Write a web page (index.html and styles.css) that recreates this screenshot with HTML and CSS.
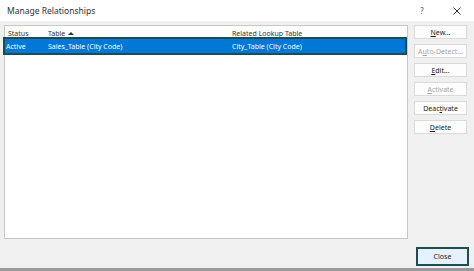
FILE: index.html
```html
<html lang="en">
  <head>
    <meta charset="UTF-8" />
    <title>Manage Relationships</title>
    <link rel="stylesheet" href="styles.css">
  </head>
  <body>
    <div class="dialog">
      <div class="titlebar">
        <span class="title">Manage Relationships</span>
        <span class="help">?</span>
        <span class="close-x">
          <svg width="8" height="8" viewBox="0 0 8 8">
            <path d="M0.5 0.5 L7.5 7.5 M7.5 0.5 L0.5 7.5" stroke="#333" stroke-width="1" fill="none" />
          </svg>
        </span>
      </div>
      <div class="main">
        <div class="list">
          <div class="list-head">
            <span class="col-status">Status</span>
            <span class="col-table">Table <span class="sort"></span></span>
            <span class="col-related">Related Lookup Table</span>
          </div>
          <div class="row selected">
            <span class="col-status">Active</span>
            <span class="col-table">Sales_Table (City Code)</span>
            <span class="col-related">City_Table (City Code)</span>
          </div>
        </div>
        <div class="buttons">
          <button class="btn"><u>N</u>ew...</button>
          <button class="btn disabled">A<u>u</u>to-Detect...</button>
          <button class="btn"><u>E</u>dit...</button>
          <button class="btn disabled"><u>A</u>ctivate</button>
          <button class="btn">Deac<u>t</u>ivate</button>
          <button class="btn"><u>D</u>elete</button>
        </div>
      </div>
      <div class="footer">
        <button class="btn default">Close</button>
      </div>
    </div>
  </body>
</html>
```

FILE: styles.css
```css
/* page */
body {
  margin: 0;
  padding: 0;
  background-color: #f0f0f0;
  font-family: "Noto Sans", "Open Sans", sans-serif;
  font-size: 7px;
  color: #222;
}

.dialog {
  width: 474px;
  height: 271px;
  display: flex;
  flex-direction: column;
  border-bottom: 3px solid #9a9a9a;
  box-sizing: border-box;
}

/* title bar */
.titlebar {
  height: 21px;
  background-color: #fff;
  display: flex;
  align-items: center;
  padding-left: 7px;
  font-size: 8.5px;
  color: #333;
}

.title {
  flex: 1;
}

.help {
  width: 10px;
  text-align: center;
  margin-right: 26px;
  font-size: 8px;
  color: #555;
}

.close-x {
  width: 8px;
  height: 8px;
  margin-right: 13px;
  display: flex;
}

/* list */
.main {
  display: flex;
  gap: 6px;
  padding: 4px 0 0 4px;
}

.list {
  width: 404px;
  height: 214px;
  background-color: #fff;
  border: 1px solid #c8c8c8;
  box-sizing: border-box;
}

.list-head,
.row {
  display: flex;
  align-items: center;
}

.list-head {
  height: 11px;
  margin-top: 2px;
  color: #333;
}

.col-status {
  width: 43px;
  padding-left: 1px;
  box-sizing: border-box;
}

.list-head .col-status {
  padding-left: 3px;
}

.col-table {
  width: 184px;
  display: flex;
  align-items: center;
  gap: 3px;
}

.sort {
  width: 0;
  height: 0;
  border-left: 3px solid transparent;
  border-right: 3px solid transparent;
  border-bottom: 3px solid #333;
}

.row.selected {
  height: 14px;
  background-color: #0078d7;
  color: #fff;
  outline: 2px solid #1e4d50;
  margin-right: 2px;
}

/* buttons */
.buttons {
  display: flex;
  flex-direction: column;
  gap: 5px;
  width: 53px;
}

.btn {
  height: 14px;
  padding: 0;
  font-family: inherit;
  font-size: 7px;
  color: #222;
  background-color: #fdfdfd;
  border: 1px solid #dadada;
}

.btn.disabled {
  color: #a6a6a6;
}

.footer {
  display: flex;
  justify-content: flex-end;
  padding: 8px 5px 0 0;
}

.btn.default {
  width: 53px;
  height: 19px;
  background-color: #e5f1fb;
  border: 2px solid #1e4d50;
}
```
